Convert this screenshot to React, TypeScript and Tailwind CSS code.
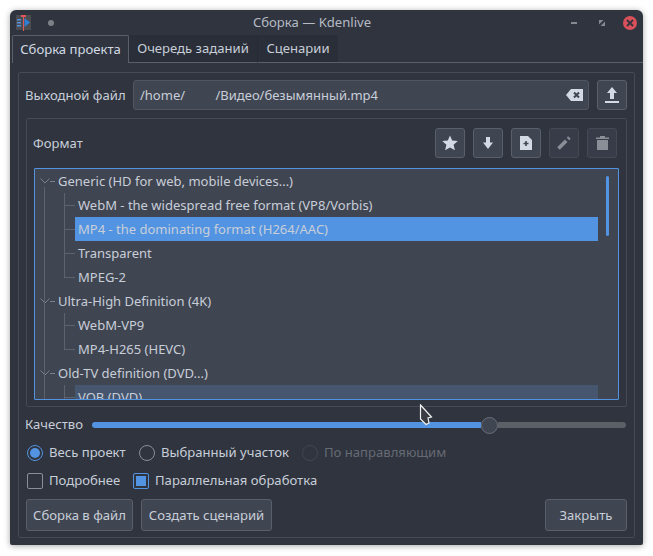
import { ReactNode } from "react";

const rows = [
  { label: "Generic (HD for web, mobile devices...)", parent: true },
  { label: "WebM - the widespread free format (VP8/Vorbis)" },
  { label: "MP4 - the dominating format (H264/AAC)", selected: true },
  { label: "Transparent" },
  { label: "MPEG-2", last: true },
  { label: "Ultra-High Definition (4K)", parent: true },
  { label: "WebM-VP9" },
  { label: "MP4-H265 (HEVC)", last: true },
  { label: "Old-TV definition (DVD...)", parent: true },
  { label: "VOB (DVD)", hovered: true },
];

function ToolButton({ children, disabled }: { children: ReactNode; disabled?: boolean }) {
  return (
    <div
      className={`w-[30px] h-[30px] shrink-0 flex items-center justify-center rounded-[3px] border ${
        disabled ? "bg-[#383c48] border-[#454954]" : "bg-[#404552] border-[#5b5f6a]"
      }`}
    >
      {children}
    </div>
  );
}

function PushButton({ children, className = "" }: { children: ReactNode; className?: string }) {
  return (
    <div className={`h-[32px] pt-[2px] flex items-center justify-center rounded-[3px] border border-[#5b5f6a] bg-[#404552] ${className}`}>
      {children}
    </div>
  );
}

function Radio({ checked, disabled }: { checked?: boolean; disabled?: boolean }) {
  return (
    <div
      className={`w-4 h-4 shrink-0 rounded-full border flex items-center justify-center ${
        checked ? "border-[#5294e2]" : disabled ? "border-[#42464f]" : "border-[#8a8e96]"
      }`}
    >
      {checked && <div className="w-2.5 h-2.5 rounded-full bg-[#5294e2]" />}
    </div>
  );
}

function Checkbox({ checked }: { checked?: boolean }) {
  return (
    <div
      className={`w-4 h-4 shrink-0 rounded-[2px] border flex items-center justify-center ${
        checked ? "border-[#5294e2]" : "border-[#8a8e96]"
      }`}
    >
      {checked && <div className="w-2.5 h-2.5 bg-[#5294e2]" />}
    </div>
  );
}

function TreeRow({ row }: { row: (typeof rows)[number] }) {
  if (row.parent) {
    return (
      <div className="relative h-6 shrink-0 flex items-center pt-[2px] pl-[23px] whitespace-nowrap">
        <svg className="absolute left-[5px] top-[7px]" width="16" height="10" viewBox="0 0 16 10" fill="none" stroke="#7d818a">
          <path d="M0.5 2.5 L5 7 L9.5 2.5" />
          <path d="M10 5.5 H15" />
        </svg>
        {row.label}
      </div>
    );
  }
  return (
    <div className="relative h-6 shrink-0 flex items-center pl-[40px] whitespace-nowrap">
      <div className={`absolute left-[29px] top-0 w-px bg-[#5f636d] ${row.last ? "h-3" : "h-6"}`} />
      <div className="absolute left-[29px] top-3 w-[11px] h-px bg-[#5f636d]" />
      <div className={`h-6 w-[523px] flex items-center pt-[2px] pl-[3px] ${row.selected ? "bg-[#5294e2]" : row.hovered ? "bg-[#46566f]" : ""}`}>
        {row.label}
      </div>
    </div>
  );
}

export default function App() {
  return (
    <div className="w-[653px] h-[556px] bg-white pt-[10px] pl-[10px] font-['Noto_Sans',sans-serif] text-[13.1px] text-[#c8ced8] overflow-hidden">
      <div className="relative w-[633px] h-[535px] bg-[#2f343f] rounded-t-[6px] rounded-b-[2px] shadow-[0_1px_6px_rgba(0,0,0,0.35)] flex flex-col overflow-hidden">
        {/* Title bar */}
        <div className="h-[25px] shrink-0 flex items-center relative px-[6px]">
          <svg width="15" height="16" viewBox="0 0 15 16">
            <rect width="15" height="15" fill="#4a4c50" />
            <path d="M1 4h4v1.5H1zM1 7h4v1.5H1zM1 10h4v1.5H1z" fill="#5294e2" />
            <path d="M8.5 3 L14 7.5 L8.5 12z" fill="#2d7fd8" />
            <rect x="7" width="1" height="16" fill="#e0585b" />
            <rect x="5" width="5" height="2" fill="#e0585b" />
          </svg>
          <div className="w-[6px] h-[6px] rounded-full bg-[#7d8087] ml-[17px]" />
          <div className="flex-1 text-center pr-[1px] text-[#b5bac3]">Сборка — Kdenlive</div>
          <div className="w-[6px] h-[2px] bg-[#868a91] mr-[22px]" />
          <svg className="mr-[18px]" width="6" height="6" viewBox="0 0 6 6" fill="#868a91">
            <path d="M0 0 H4.5 L0 4.5z M6 1.5 V6 H1.5z" />
          </svg>
          <div className="w-[14px] h-[14px] rounded-full bg-[#d8505a] flex items-center justify-center">
            <svg width="8" height="8" viewBox="0 0 8 8" stroke="#2f343f" strokeWidth="1.8">
              <path d="M1 1 L7 7 M7 1 L1 7" />
            </svg>
          </div>
        </div>

        {/* Tabs */}
        <div className="h-[28px] shrink-0 flex pl-[2px]">
          <div className="w-[117px] flex items-center justify-center rounded-t-[2px] border border-b-0 border-[#5b5f6a] bg-[#2f343f] text-[#d3dae3]">
            Сборка проекта
          </div>
          <div className="w-[129px] flex items-center justify-center bg-[#2a2e38] border-b border-[#5b5f6a] border-r border-r-[#262a33]">
            Очередь заданий
          </div>
          <div className="w-[80px] flex items-center justify-center bg-[#2a2e38] border-b border-[#5b5f6a]">Сценарии</div>
          <div className="w-[305px] border-b border-[#5b5f6a]" />
        </div>

        {/* Tab page */}
        <div className="mt-[9px] ml-[8px] w-[617px] h-[466px] rounded-[2px] border border-[#464a55] px-[7px] pt-[7px] flex flex-col">
          {/* Output file */}
          <div className="h-[30px] shrink-0 flex items-center">
            <div className="w-[108px] -ml-px pt-[2px] whitespace-nowrap">Выходной файл</div>
            <div className="w-[456px] h-[30px] rounded-[3px] border border-[#525661] bg-[#404552] flex items-center pl-[6px] pr-[5px] justify-between">
              <span className="whitespace-pre pt-[2px] text-[13px]">/home/         /Видео/безымянный.mp4</span>
              <svg width="17" height="12" viewBox="0 0 17 12">
                <path d="M5 0 H17 V12 H5 L0 6z" fill="#d3dae3" />
                <path d="M8 3.5 L13 8.5 M13 3.5 L8 8.5" stroke="#404552" strokeWidth="2" />
              </svg>
            </div>
            <div className="ml-[8px]">
              <ToolButton>
                <svg width="14" height="16" viewBox="0 0 14 16" fill="#d3dae3">
                  <path d="M7 0 L12 6 H9 V12 H5 V6 H2z" />
                  <rect y="14" width="14" height="2" />
                </svg>
              </ToolButton>
            </div>
          </div>

          {/* Format group */}
          <div className="mt-[8px] w-[601px] h-[289px] rounded-[2px] border border-[#464a55] pl-[7px] pt-[9px] flex flex-col">
            <div className="h-[30px] shrink-0 flex items-center pr-[9px] gap-[8px]">
              <div className="flex-1 -ml-px pt-[2px]">Формат</div>
              <ToolButton>
                <svg width="16" height="16" viewBox="0 0 16 16" fill="#d3dae3">
                  <path d="M8 0.5 L10.2 5.6 L15.8 6.1 L11.6 9.8 L12.9 15.3 L8 12.4 L3.1 15.3 L4.4 9.8 L0.2 6.1 L5.8 5.6z" />
                </svg>
              </ToolButton>
              <ToolButton>
                <svg width="10" height="12" viewBox="0 0 10 12" fill="#d3dae3">
                  <path d="M3 0 H7 V5.5 H10 L5 12 L0 5.5 H3z" />
                </svg>
              </ToolButton>
              <ToolButton>
                <svg width="12" height="14" viewBox="0 0 12 14">
                  <path d="M0 0 H8 L12 4 V14 H0z" fill="#d3dae3" />
                  <path d="M6 5 V10 M3.5 7.5 H8.5" stroke="#404552" strokeWidth="1.6" />
                </svg>
              </ToolButton>
              <ToolButton disabled>
                <svg width="14" height="14" viewBox="0 0 14 14" fill="none" stroke="#8a8e96" strokeWidth="3.6">
                  <path d="M1.5 12.5 L9.2 4.8" />
                  <path d="M11 3 L12.4 1.6" />
                </svg>
              </ToolButton>
              <ToolButton disabled>
                <svg width="13" height="14" viewBox="0 0 13 14" fill="#8a8e96">
                  <path d="M0 1.5 H4 V0 H9 V1.5 H13 V3 H0z" />
                  <path d="M1 4 H12 V14 H1z" />
                </svg>
              </ToolButton>
            </div>

            {/* Tree */}
            <div className="relative mt-[10px] w-[585px] h-[232px] rounded-[1px] border border-[#5294e2] bg-[#404552] text-[13px] overflow-hidden flex flex-col">
              {rows.map((row) => (
                <TreeRow key={row.label} row={row} />
              ))}
              <div className="absolute left-[9px] top-[18px] bottom-0 w-px bg-[#5f636d]" />
              <div className="absolute right-[9px] top-[7px] w-[3px] h-[60px] rounded-full bg-[#5294e2]" />
            </div>
          </div>

          {/* Quality */}
          <div className="mt-[9px] h-[18px] shrink-0 flex items-center">
            <div className="w-[66px] -ml-px mr-px">Качество</div>
            <div className="w-[389px] h-[6px] rounded-l-full bg-[#5294e2]" />
            <div className="w-[17px] h-[17px] shrink-0 rounded-full bg-[#404552] border border-[#6a6e78]" />
            <div className="w-[128px] h-[6px] rounded-r-full bg-[#5b5f66]" />
          </div>

          {/* Range */}
          <div className="mt-[9px] h-[20px] shrink-0 flex items-center pl-[1px]">
            <Radio checked />
            <span className="ml-[6px] w-[90px]">Весь проект</span>
            <Radio />
            <span className="ml-[6px] w-[141px]">Выбранный участок</span>
            <Radio disabled />
            <span className="ml-[6px] text-[#666a73]">По направляющим</span>
          </div>

          {/* Options */}
          <div className="mt-[8px] h-[20px] shrink-0 flex items-center pl-[1px]">
            <Checkbox />
            <span className="ml-[6px] w-[84px]">Подробнее</span>
            <Checkbox checked />
            <span className="ml-[6px]">Параллельная обработка</span>
          </div>

          {/* Buttons */}
          <div className="mt-[8px] flex">
            <PushButton className="w-[107px]">Сборка в файл</PushButton>
            <PushButton className="w-[131px] ml-[8px]">Создать сценарий</PushButton>
            <PushButton className="w-[82px] ml-auto">Закрыть</PushButton>
          </div>
        </div>

        {/* Mouse pointer */}
        <svg className="absolute left-[409px] top-[394px]" width="14" height="22" viewBox="0 0 14 22">
          <path d="M1.5 1 L12.5 13 L9 14 L10 19 L7 20.5 L1.5 15z" fill="#3a3d44" stroke="#f2f2f2" strokeWidth="1.2" />
        </svg>
      </div>
    </div>
  );
}
